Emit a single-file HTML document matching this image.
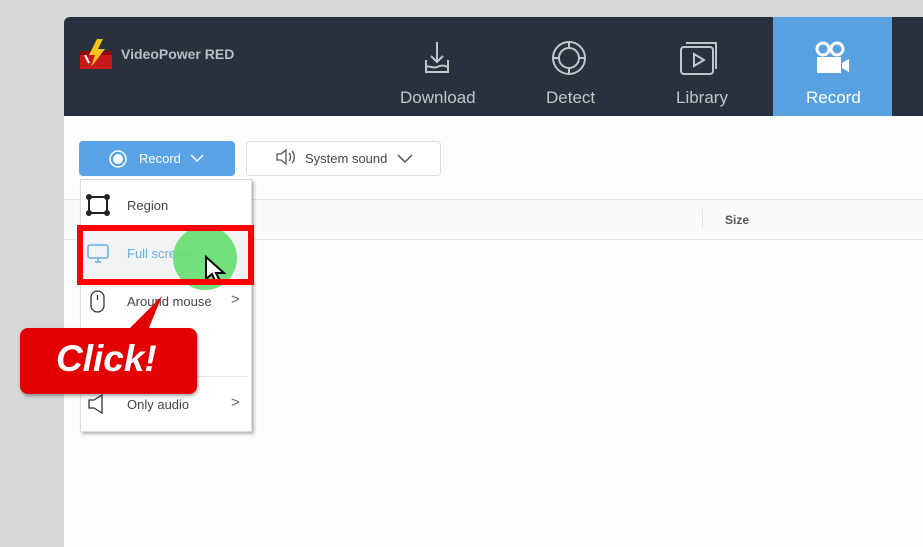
<!DOCTYPE html>
<html><head><style>
body{margin:0;width:923px;height:547px;background:#d5d7d9;position:relative;overflow:hidden;font-family:"Liberation Sans",sans-serif}
.a{position:absolute}
</style></head><body>
<div class="a" style="left:64px;top:17px;width:859px;height:99px;background:#29313f;border-top-left-radius:6px"></div>
<div class="a" style="left:64px;top:116px;width:859px;height:431px;background:#fdfefc"></div>
<div class="a" style="left:773px;top:17px;width:119px;height:99px;background:#58a2e4"></div>
<svg class="a" style="left:79px;top:37px" width="34" height="34" viewBox="0 0 34 34"><rect x="1" y="14" width="32" height="18" fill="#c7191a"/><path d="M1 14h32v4H1z" fill="#8a0a0a"/><path d="M18 2 L10 18 L16 18 L12 30 L26 12 L19 12 L24 2Z" fill="#f6c51c"/><path d="M6 18l4 8" stroke="#fff" stroke-width="2"/></svg>
<div class="a" style="left:121px;top:46px;color:#b9bdc4;font-size:14px;font-weight:bold">VideoPower RED</div>
<svg class="a" style="left:418px;top:40px" width="38" height="38" viewBox="0 0 38 38" fill="none" stroke="#c2c6cc" stroke-width="2"><path d="M19 2v20M13 16l6 6 6-6M8 20v12h22V20"/><path d="M8 27c4-2 7 2 11 0s7-2 11 0"/></svg>
<div class="a" style="left:400px;top:88px;color:#c2c6cc;font-size:17px">Download</div>
<svg class="a" style="left:551px;top:40px" width="36" height="36" viewBox="0 0 36 36" fill="none" stroke="#c2c6cc" stroke-width="2"><circle cx="18" cy="18" r="16"/><circle cx="18" cy="18" r="10"/><path d="M18 2v6M18 28v6M2 18h6M28 18h6"/></svg>
<div class="a" style="left:546px;top:88px;color:#c2c6cc;font-size:17px">Detect</div>
<svg class="a" style="left:680px;top:42px" width="40" height="34" viewBox="0 0 40 34" fill="none" stroke="#c2c6cc" stroke-width="2"><rect x="1" y="5" width="32" height="27" rx="3"/><path d="M6 1h30v26"/><path d="M14 12v12l10-6z"/></svg>
<div class="a" style="left:676px;top:88px;color:#c2c6cc;font-size:17px">Library</div>
<svg class="a" style="left:814px;top:41px" width="36" height="34" viewBox="0 0 36 34"><circle cx="9" cy="8" r="6" fill="none" stroke="#fff" stroke-width="3"/><circle cx="23" cy="8" r="6" fill="none" stroke="#fff" stroke-width="3"/><rect x="3" y="16" width="24" height="16" fill="#fff"/><path d="M28 22l7-4v13l-7-4z" fill="#fff"/></svg>
<div class="a" style="left:806px;top:88px;color:#fff;font-size:17px">Record</div>
<div class="a" style="left:79px;top:141px;width:156px;height:35px;background:#5aa3e6;border-radius:4px"></div>
<svg class="a" style="left:108px;top:149px" width="20" height="20"><circle cx="10" cy="10" r="8" fill="none" stroke="#fff" stroke-width="1.5"/><circle cx="10" cy="10" r="5" fill="#fff"/></svg>
<div class="a" style="left:139px;top:151px;color:#fff;font-size:13px">Record</div>
<svg class="a" style="left:190px;top:153px" width="14" height="10"><path d="M1 2l6 6 6-6" fill="none" stroke="#fff" stroke-width="1.5"/></svg>
<div class="a" style="left:246px;top:141px;width:193px;height:33px;border:1px solid #ddd;border-radius:4px;background:#fff"></div>
<svg class="a" style="left:275px;top:148px" width="20" height="18" fill="none" stroke="#555" stroke-width="1.3"><path d="M2 6h4l5-4v14l-5-4H2z M14 5c2 2 2 6 0 8M17 3c3 3 3 9 0 12"/></svg>
<div class="a" style="left:305px;top:151px;color:#444;font-size:13px">System sound</div>
<svg class="a" style="left:397px;top:153px" width="16" height="10"><path d="M1 2l7 7 7-7" fill="none" stroke="#555" stroke-width="1.5"/></svg>
<div class="a" style="left:64px;top:199px;width:859px;height:39px;background:#fafafa;border-top:1px solid #e6e6e6;border-bottom:1px solid #e6e6e6"></div>
<div class="a" style="left:702px;top:209px;width:1px;height:20px;background:#e3e3e3"></div>
<div class="a" style="left:725px;top:213px;color:#555;font-size:12px;font-weight:bold">Size</div>
<div class="a" style="left:80px;top:179px;width:170px;height:251px;background:#fff;border:1px solid #ddd;box-shadow:2px 2px 3px rgba(0,0,0,.3)"></div>
<svg class="a" style="left:86px;top:194px" width="24" height="22" fill="none" stroke="#222" stroke-width="2"><rect x="3" y="3" width="18" height="16"/><circle cx="3" cy="3" r="2" fill="#222"/><circle cx="21" cy="3" r="2" fill="#222"/><circle cx="3" cy="19" r="2" fill="#222"/><circle cx="21" cy="19" r="2" fill="#222"/></svg>
<div class="a" style="left:127px;top:198px;color:#444;font-size:13px">Region</div>
<div class="a" style="left:83px;top:231px;width:164px;height:47px;background:#f2f3f4"></div>
<svg class="a" style="left:86px;top:243px" width="24" height="22" fill="none" stroke="#6aaee0" stroke-width="1.5"><rect x="2" y="2" width="20" height="13" rx="2"/><path d="M9 19h6M12 15v4"/></svg>
<div class="a" style="left:127px;top:246px;color:#6aaee0;font-size:13px">Full screen</div>
<div class="a" style="left:173px;top:226px;width:64px;height:64px;border-radius:50%;background:#67de72;opacity:.92"></div>
<svg class="a" style="left:204px;top:255px" width="22" height="30"><path d="M2 2v22l6-5 4 9 4-2-4-8h8z" fill="#fff" stroke="#000" stroke-width="2"/></svg>
<svg class="a" style="left:88px;top:290px" width="20" height="24" fill="none" stroke="#333" stroke-width="1.3"><rect x="3" y="1" width="13" height="21" rx="6.5"/><path d="M9.5 5v5"/></svg>
<div class="a" style="left:127px;top:294px;color:#444;font-size:13px">Around mouse</div>
<div class="a" style="left:231px;top:291px;color:#666;font-size:15px">&gt;</div>
<div class="a" style="left:83px;top:376px;width:164px;height:1px;background:#e6e6e6"></div>
<svg class="a" style="left:86px;top:393px" width="22" height="22" fill="none" stroke="#333" stroke-width="1.3"><path d="M3 7h5l8-5v18l-8-5H3z"/></svg>
<div class="a" style="left:127px;top:397px;color:#444;font-size:13px">Only audio</div>
<div class="a" style="left:231px;top:394px;color:#666;font-size:15px">&gt;</div>
<div class="a" style="left:77px;top:225px;width:165px;height:48px;border:6px solid #ff0000"></div>
<svg class="a" style="left:0;top:280px" width="220" height="120"><path d="M162 16 L148 50 L128 50z" fill="#e20000"/></svg>
<div class="a" style="left:20px;top:328px;width:177px;height:66px;background:#e40000;border-radius:8px;box-shadow:1px 2px 3px rgba(0,0,0,.35)"></div>
<div class="a" style="left:56px;top:338px;color:#fff;font-size:37px;font-weight:bold;font-style:italic">Click!</div>
</body></html>
